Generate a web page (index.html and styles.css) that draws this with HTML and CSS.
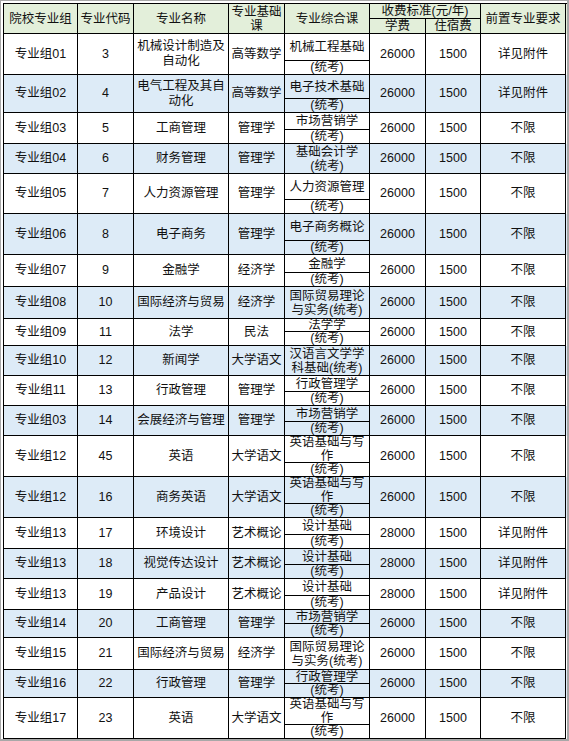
FILE: index.html
```html
<!DOCTYPE html>
<html lang="zh">
<head>
<meta charset="utf-8">
<title>专业组</title>
<link rel="stylesheet" href="styles.css">
</head>
<body>
<div class="page">
  <div class="table">
    <div class="head">
      <div class="c span2">院校专业组</div>
      <div class="c span2">专业代码</div>
      <div class="c span2">专业名称</div>
      <div class="c span2 narrow">专业基础课</div>
      <div class="c span2">专业综合课</div>
      <div class="c fee">收费标准(元/年)</div>
      <div class="c span2">前置专业要求</div>
      <div class="c">学费</div>
      <div class="c">住宿费</div>
    </div>

    <div class="row r41">
      <div class="c">专业组01</div><div class="c">3</div><div class="c">机械设计制造及自动化</div><div class="c">高等数学</div>
      <div class="c split"><div class="top">机械工程基础</div><div class="bot">(统考)</div></div>
      <div class="c">26000</div><div class="c">1500</div><div class="c">详见附件</div>
    </div>
    <div class="row r38 alt">
      <div class="c">专业组02</div><div class="c">4</div><div class="c">电气工程及其自动化</div><div class="c">高等数学</div>
      <div class="c split"><div class="top">电子技术基础</div><div class="bot">(统考)</div></div>
      <div class="c">26000</div><div class="c">1500</div><div class="c">详见附件</div>
    </div>
    <div class="row r31">
      <div class="c">专业组03</div><div class="c">5</div><div class="c">工商管理</div><div class="c">管理学</div>
      <div class="c split"><div class="top">市场营销学</div><div class="bot">(统考)</div></div>
      <div class="c">26000</div><div class="c">1500</div><div class="c">不限</div>
    </div>
    <div class="row r30 alt">
      <div class="c">专业组04</div><div class="c">6</div><div class="c">财务管理</div><div class="c">管理学</div>
      <div class="c wrap">基础会计学<br>(统考)</div>
      <div class="c">26000</div><div class="c">1500</div><div class="c">不限</div>
    </div>
    <div class="row r40">
      <div class="c">专业组05</div><div class="c">7</div><div class="c">人力资源管理</div><div class="c">管理学</div>
      <div class="c split"><div class="top">人力资源管理</div><div class="bot">(统考)</div></div>
      <div class="c">26000</div><div class="c">1500</div><div class="c">不限</div>
    </div>
    <div class="row r41 alt">
      <div class="c">专业组06</div><div class="c">8</div><div class="c">电子商务</div><div class="c">管理学</div>
      <div class="c split"><div class="top">电子商务概论</div><div class="bot">(统考)</div></div>
      <div class="c">26000</div><div class="c">1500</div><div class="c">不限</div>
    </div>
    <div class="row r32">
      <div class="c">专业组07</div><div class="c">9</div><div class="c">金融学</div><div class="c">经济学</div>
      <div class="c split"><div class="top">金融学</div><div class="bot">(统考)</div></div>
      <div class="c">26000</div><div class="c">1500</div><div class="c">不限</div>
    </div>
    <div class="row r32 alt">
      <div class="c">专业组08</div><div class="c">10</div><div class="c">国际经济与贸易</div><div class="c">经济学</div>
      <div class="c wrap">国际贸易理论<br>与实务(统考)</div>
      <div class="c">26000</div><div class="c">1500</div><div class="c">不限</div>
    </div>
    <div class="row r27">
      <div class="c">专业组09</div><div class="c">11</div><div class="c">法学</div><div class="c">民法</div>
      <div class="c split"><div class="top">法学学</div><div class="bot">(统考)</div></div>
      <div class="c">26000</div><div class="c">1500</div><div class="c">不限</div>
    </div>
    <div class="row r30 alt">
      <div class="c">专业组10</div><div class="c">12</div><div class="c">新闻学</div><div class="c">大学语文</div>
      <div class="c wrap">汉语言文学学<br>科基础(统考)</div>
      <div class="c">26000</div><div class="c">1500</div><div class="c">不限</div>
    </div>
    <div class="row r30">
      <div class="c">专业组11</div><div class="c">13</div><div class="c">行政管理</div><div class="c">管理学</div>
      <div class="c split"><div class="top">行政管理学</div><div class="bot">(统考)</div></div>
      <div class="c">26000</div><div class="c">1500</div><div class="c">不限</div>
    </div>
    <div class="row r30 alt">
      <div class="c">专业组03</div><div class="c">14</div><div class="c">会展经济与管理</div><div class="c">管理学</div>
      <div class="c split"><div class="top">市场营销学</div><div class="bot">(统考)</div></div>
      <div class="c">26000</div><div class="c">1500</div><div class="c">不限</div>
    </div>
    <div class="row r41">
      <div class="c">专业组12</div><div class="c">45</div><div class="c">英语</div><div class="c">大学语文</div>
      <div class="c split"><div class="top">英语基础与写作</div><div class="bot">(统考)</div></div>
      <div class="c">26000</div><div class="c">1500</div><div class="c">不限</div>
    </div>
    <div class="row r41 alt">
      <div class="c">专业组12</div><div class="c">16</div><div class="c">商务英语</div><div class="c">大学语文</div>
      <div class="c split"><div class="top">英语基础与写作</div><div class="bot">(统考)</div></div>
      <div class="c">26000</div><div class="c">1500</div><div class="c">不限</div>
    </div>
    <div class="row r31">
      <div class="c">专业组13</div><div class="c">17</div><div class="c">环境设计</div><div class="c">艺术概论</div>
      <div class="c split"><div class="top">设计基础</div><div class="bot">(统考)</div></div>
      <div class="c">28000</div><div class="c">1500</div><div class="c">详见附件</div>
    </div>
    <div class="row r30 alt">
      <div class="c">专业组13</div><div class="c">18</div><div class="c">视觉传达设计</div><div class="c">艺术概论</div>
      <div class="c split"><div class="top">设计基础</div><div class="bot">(统考)</div></div>
      <div class="c">28000</div><div class="c">1500</div><div class="c">详见附件</div>
    </div>
    <div class="row r31">
      <div class="c">专业组13</div><div class="c">19</div><div class="c">产品设计</div><div class="c">艺术概论</div>
      <div class="c split"><div class="top">设计基础</div><div class="bot">(统考)</div></div>
      <div class="c">28000</div><div class="c">1500</div><div class="c">详见附件</div>
    </div>
    <div class="row r28 alt">
      <div class="c">专业组14</div><div class="c">20</div><div class="c">工商管理</div><div class="c">管理学</div>
      <div class="c split"><div class="top">市场营销学</div><div class="bot">(统考)</div></div>
      <div class="c">26000</div><div class="c">1500</div><div class="c">不限</div>
    </div>
    <div class="row r32">
      <div class="c">专业组15</div><div class="c">21</div><div class="c">国际经济与贸易</div><div class="c">经济学</div>
      <div class="c wrap">国际贸易理论<br>与实务(统考)</div>
      <div class="c">26000</div><div class="c">1500</div><div class="c">不限</div>
    </div>
    <div class="row r28 alt">
      <div class="c">专业组16</div><div class="c">22</div><div class="c">行政管理</div><div class="c">管理学</div>
      <div class="c split"><div class="top">行政管理学</div><div class="bot">(统考)</div></div>
      <div class="c">26000</div><div class="c">1500</div><div class="c">不限</div>
    </div>
    <div class="row r41">
      <div class="c">专业组17</div><div class="c">23</div><div class="c">英语</div><div class="c">大学语文</div>
      <div class="c split"><div class="top">英语基础与写作</div><div class="bot">(统考)</div></div>
      <div class="c">26000</div><div class="c">1500</div><div class="c">不限</div>
    </div>
  </div>
</div>
</body>
</html>
```

FILE: styles.css
```css
html, body {
  margin: 0;
  padding: 0;
  background: #ffffff;
}

body {
  font-family: "Liberation Sans", "Noto Sans CJK SC", sans-serif;
  font-size: 12.5px;
  line-height: 15px;
  color: #111111;
}

.page {
  box-sizing: border-box;
  width: 569px;
  height: 741px;
  border-top: 1px solid #a8a8a8;
  border-left: 1px solid #a8a8a8;
  border-right: 2px solid #a8a8a8;
  border-bottom: 2px solid #a8a8a8;
  padding: 2px 0 0 2px;
}

.table {
  width: 563px;
  border-left: 1px solid #000;
  border-top: 1px solid #000;
}

.head,
.row {
  display: grid;
  grid-template-columns: 74px 56px 95px 56px 85px 56px 55px 85px;
}

.head {
  grid-template-rows: 15px 15px;
  background: #e3efda;
}

.c {
  box-sizing: border-box;
  border-right: 1px solid #000;
  border-bottom: 1px solid #000;
  display: flex;
  align-items: center;
  justify-content: center;
  text-align: center;
  overflow: hidden;
  min-width: 0;
  min-height: 0;
}

.span2 {
  grid-row: span 2;
}

.fee {
  grid-column: span 2;
  line-height: 14px;
}

.narrow {
  line-height: 14px;
}

.head .c {
  line-height: 14px;
}

.alt {
  background: #ddebf7;
}

.split {
  flex-direction: column;
  align-items: stretch;
  justify-content: stretch;
}

.split .top {
  flex: 1;
  min-height: 0;
  border-bottom: 1px solid #000;
  display: flex;
  align-items: center;
  justify-content: center;
  overflow: hidden;
  line-height: 14px;
}

.split .bot {
  height: 13px;
  line-height: 13px;
  flex: none;
  text-align: center;
}

.wrap {
  line-height: 14px;
}

.r27 { height: 27px; }
.r28 { height: 28px; }
.r30 { height: 30px; }
.r31 { height: 31px; }
.r32 { height: 32px; }
.r38 { height: 38px; }
.r40 { height: 40px; }
.r41 { height: 41px; }
```
